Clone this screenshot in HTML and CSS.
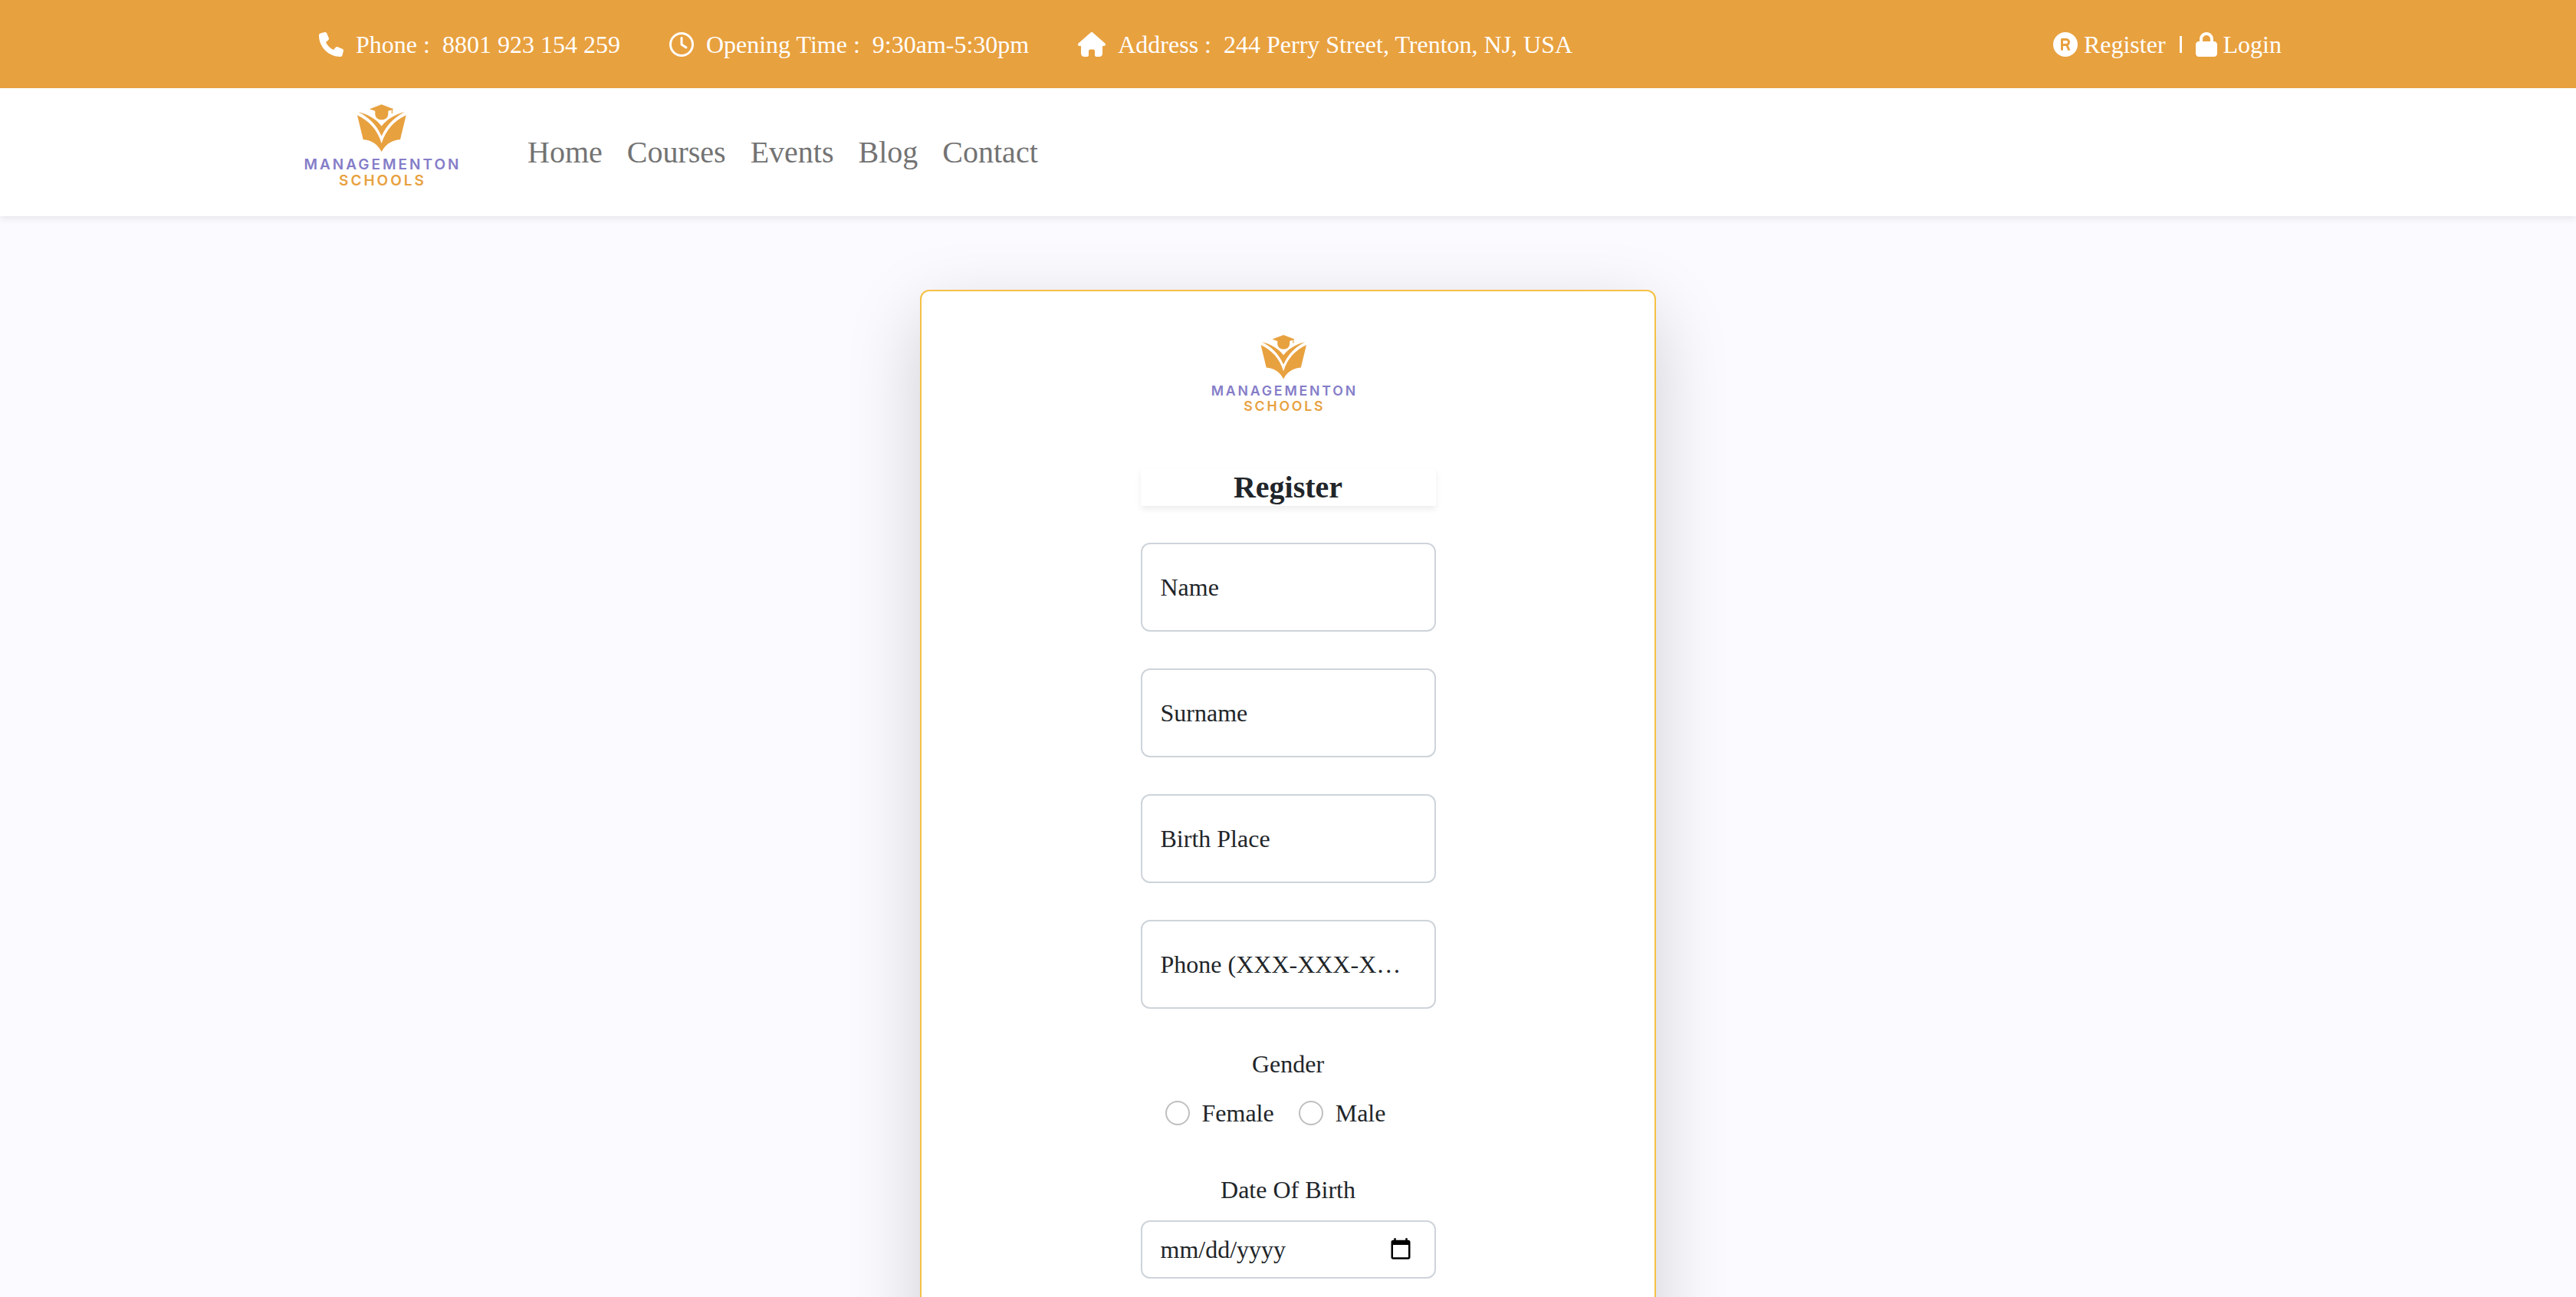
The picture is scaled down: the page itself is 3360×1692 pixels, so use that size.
FILE: index.html
```html
<!DOCTYPE html>
<html lang="en">
<head>
<meta charset="utf-8">
<meta name="viewport" content="width=device-width, initial-scale=1">
<title>Managementon Schools - Register</title>
<link rel="stylesheet" href="styles.css">
</head>
<body>
<div class="topbar">
  <div class="container topbar-inner">
    <ul class="contacts">
      <li class="contact">
        <svg class="icon" viewBox="0 0 512 512" aria-hidden="true"><path d="M164.900 24.600c-7.700-18.600-28-28.500-47.400-23.200l-88 24C12.100 30.200 0 46 0 64c0 247.400 200.600 448 448 448c18 0 33.800-12.100 38.600-29.500l24-88c5.300-19.400-4.600-39.700-23.200-47.400l-96-40c-16.300-6.800-35.200-2.100-46.300 11.600L304.700 368C234.300 334.700 177.300 277.700 144 207.300L193.300 167c13.700-11.200 18.400-30 11.600-46.300l-40-96z"/></svg>
        <span>Phone :</span><span>8801 923 154 259</span>
      </li>
      <li class="contact">
        <svg class="icon" viewBox="0 0 512 512" aria-hidden="true"><path d="M464 256A208 208 0 1 1 48 256a208 208 0 1 1 416 0zM0 256a256 256 0 1 0 512 0A256 256 0 1 0 0 256zM232 120V256c0 8 4 15.500 10.700 20l96 64c11 7.400 25.900 4.400 33.300-6.700s4.400-25.900-6.700-33.300L280 243.200V120c0-13.300-10.700-24-24-24s-24 10.700-24 24z"/></svg>
        <span>Opening Time :</span><span>9:30am-5:30pm</span>
      </li>
      <li class="contact">
        <svg class="icon icon-wide" viewBox="0 0 576 512" aria-hidden="true"><path d="M575.800 255.500c0 18-15 32.100-32 32.100h-32l.7 160.200c0 35.300-28 64.200-64 64.200h-64c-17.700 0-32-14.300-32-32v-88c0-17.700-14.300-32-32-32h-64c-17.700 0-32 14.300-32 32v88c0 17.700-14.300 32-32 32h-64c-35.300 0-64-28.700-64-64V287.600H32c-18 0-32-14-32-32.100c0-9 3-17 10-24L266.400 8c7-7 15-8 22-8s15 2 21 7L564.800 231.500c8 7 12 15 11 24z"/></svg>
        <span>Address :</span><span>244 Perry Street, Trenton, NJ, USA</span>
      </li>
    </ul>
    <div class="account">
      <a class="account-link" href="#register">
        <svg class="icon" viewBox="0 0 512 512" aria-hidden="true"><path fill-rule="evenodd" d="M256 512A256 256 0 1 0 256 0a256 256 0 1 0 0 512zM160 152c0-13.300 10.700-24 24-24h88c44.200 0 80 35.800 80 80c0 28-14.400 52.700-36.300 67l34.100 75.100c5.500 12.100 .1 26.300-11.900 31.800s-26.300 .1-31.800-11.900L268.900 288H208v72c0 13.300-10.700 24-24 24s-24-10.700-24-24V152zm48 88h64c17.700 0 32-14.300 32-32s-14.300-32-32-32H208v64z"/></svg>
        <span>Register</span>
      </a>
      <span class="divider"></span>
      <a class="account-link" href="#login">
        <svg class="icon icon-narrow" viewBox="0 0 448 512" aria-hidden="true"><path fill-rule="evenodd" d="M144 144v48H304V144c0-44.200-35.800-80-80-80s-80 35.800-80 80zM80 192V144C80 64.500 144.500 0 224 0s144 64.500 144 144v48h16c35.300 0 64 28.700 64 64V448c0 35.300-28.700 64-64 64H64c-35.300 0-64-28.700-64-64V256c0-35.300 28.700-64 64-64H80z"/></svg>
        <span>Login</span>
      </a>
    </div>
  </div>
</div>

<header class="navbar">
  <div class="container navbar-inner">
    <a class="brand" href="#home" aria-label="Managementon Schools">
      <svg class="brand-logo" viewBox="0 0 240 135">
        <g id="logo">
          <g fill="#e8a13f">
            <path d="M113.700 5.300L129.300 11.200L128 11.900V17H126.800V12.400L122.300 13.800V17.500C122.300 22.500 118.500 25.300 113.800 25.300S105.300 22.500 105.300 17.500V13.800L98 11.200Z"/>
            <path d="M83.300 15C95 18 106 23.500 113.700 33.500C121.500 23.500 132.500 18 144 15C130 22.500 121 31 113.700 46.500C106.500 31 97.500 22.500 83.300 15Z"/>
            <path d="M82 19.300C96 26 108 37 113.700 56C119.500 37 131.500 26 145.700 19.300L138 51C126.500 52 118.500 57.500 113.700 67C109 57.500 101 52 89.700 51Z"/>
          </g>
          <text class="logo-name" x="115" y="90">MANAGEMENTON</text>
          <text class="logo-kind" x="115" y="111">SCHOOLS</text>
        </g>
      </svg>
    </a>
    <nav class="nav">
      <a href="#home">Home</a>
      <a href="#courses">Courses</a>
      <a href="#events">Events</a>
      <a href="#blog">Blog</a>
      <a href="#contact">Contact</a>
    </nav>
  </div>
</header>

<main class="page">
  <section class="card">
    <svg class="card-logo" viewBox="0 0 240 135" aria-hidden="true"><use href="#logo"/></svg>
    <form class="form">
      <h1 class="title">Register</h1>
      <div class="field"><input id="name" type="text" placeholder=" "><label for="name">Name</label></div>
      <div class="field"><input id="surname" type="text" placeholder=" "><label for="surname">Surname</label></div>
      <div class="field"><input id="birthplace" type="text" placeholder=" "><label for="birthplace">Birth Place</label></div>
      <div class="field"><input id="phone" type="tel" placeholder=" "><label for="phone">Phone (XXX-XXX-XXXX)</label></div>
      <fieldset class="group">
        <legend class="caption">Gender</legend>
        <div class="choices">
          <label class="choice"><input type="radio" name="gender" value="female">Female</label>
          <label class="choice"><input type="radio" name="gender" value="male">Male</label>
        </div>
      </fieldset>
      <div class="group">
        <label class="caption" for="birthdate">Date Of Birth</label>
        <input class="date" id="birthdate" type="date">
      </div>
    </form>
  </section>
</main>
</body>
</html>
```

FILE: styles.css
```css
* {
  box-sizing: border-box;
}

body {
  margin: 0;
  background: #fbfaff;
  color: #212529;
  font-family: "Liberation Serif", "Times New Roman", serif;
  font-size: 32px;
  line-height: 48px;
}

a {
  color: inherit;
  text-decoration: none;
}

.container {
  max-width: 2640px;
  margin: 0 auto;
  padding: 0 24px;
}

/* Top bar */
.topbar {
  background: #e8a13f;
  color: #fff;
}

.topbar-inner {
  display: flex;
  flex-wrap: wrap;
  align-items: center;
  justify-content: space-between;
  min-height: 115px;
}

.contacts {
  display: flex;
  flex-wrap: wrap;
  gap: 64px;
  margin: 0;
  padding: 0 32px;
  list-style: none;
}

.contact {
  display: flex;
  align-items: center;
  gap: 16px;
}

.icon {
  flex: none;
  width: 32px;
  height: 32px;
  fill: currentColor;
}

.icon-wide {
  width: 36px;
}

.icon-narrow {
  width: 28px;
}

.account {
  display: flex;
  align-items: center;
  gap: 18px;
}

.account-link {
  display: flex;
  align-items: center;
  gap: 8px;
}

.divider {
  width: 3px;
  height: 22px;
  background: #fff;
}

/* Navigation */
.navbar {
  position: relative;
  background: #fff;
  box-shadow: 0 4px 8px rgba(0, 0, 0, 0.075);
}

.navbar-inner {
  display: flex;
  flex-wrap: wrap;
  align-items: center;
  gap: 48px;
  padding-top: 16px;
  padding-bottom: 16px;
}

.brand-logo {
  display: block;
  width: 240px;
  height: 135px;
}

.logo-name,
.logo-kind {
  font-family: Inter, sans-serif;
  font-size: 19px;
  font-weight: 600;
  letter-spacing: 3px;
  text-anchor: middle;
}

.logo-name {
  fill: #857dc8;
}

.logo-kind {
  fill: #e8a13f;
}

.nav {
  display: flex;
  flex-wrap: wrap;
  color: #737373;
  font-size: 40px;
}

.nav a {
  padding: 0 16px;
}

/* Registration card */
.page {
  padding: 96px 24px;
}

.card {
  display: flex;
  flex-direction: column;
  align-items: center;
  gap: 54px;
  max-width: 960px;
  margin: 0 auto;
  padding: 52px 24px 96px;
  border: 2px solid #f5c144;
  border-radius: 12px;
  background: #fff;
  box-shadow: 0 32px 96px rgba(0, 0, 0, 0.175);
}

.card-logo {
  width: 224px;
  height: 126px;
}

.form {
  display: flex;
  flex-direction: column;
  gap: 48px;
  width: 100%;
  max-width: 385px;
}

.title {
  margin: 0;
  box-shadow: 0 4px 8px rgba(0, 0, 0, 0.075);
  font-size: 40px;
  line-height: 48px;
  text-align: center;
}

.field {
  position: relative;
}

.field input,
.date {
  display: block;
  width: 100%;
  border: 2px solid #ced4da;
  border-radius: 12px;
  background: #fff;
  color: inherit;
  font: inherit;
}

.field input {
  height: 116px;
  padding: 0 24px;
}

/* The label lies over the empty box and gives way to typed text */
.field label {
  position: absolute;
  inset: 0;
  overflow: hidden;
  margin: 0 26px;
  padding: 34px 0;
  text-overflow: ellipsis;
  white-space: nowrap;
  pointer-events: none;
}

.field input:not(:placeholder-shown) + label {
  padding: 0;
  font-size: 24px;
  line-height: 40px;
}

.group {
  min-width: 0;
  margin: 0;
  padding: 0;
  border: 0;
}

.caption {
  display: block;
  width: 100%;
  margin-bottom: 16px;
  padding: 0;
  text-align: center;
}

.choices {
  display: flex;
  gap: 32px;
  padding: 0 32px 4px;
}

.choice {
  display: flex;
  align-items: center;
  gap: 16px;
}

.choice input {
  width: 32px;
  height: 32px;
  margin: 0;
  border: 2px solid #bfbfbf;
  border-radius: 50%;
  background: #fff;
  appearance: none;
}

.choice input:checked {
  border: 8px solid #e8a13f;
}

.date {
  height: 76px;
  padding: 12px 26px 12px 24px;
}

.date::-webkit-datetime-edit-month-field,
.date::-webkit-datetime-edit-day-field,
.date::-webkit-datetime-edit-year-field {
  padding: 0;
}
```
